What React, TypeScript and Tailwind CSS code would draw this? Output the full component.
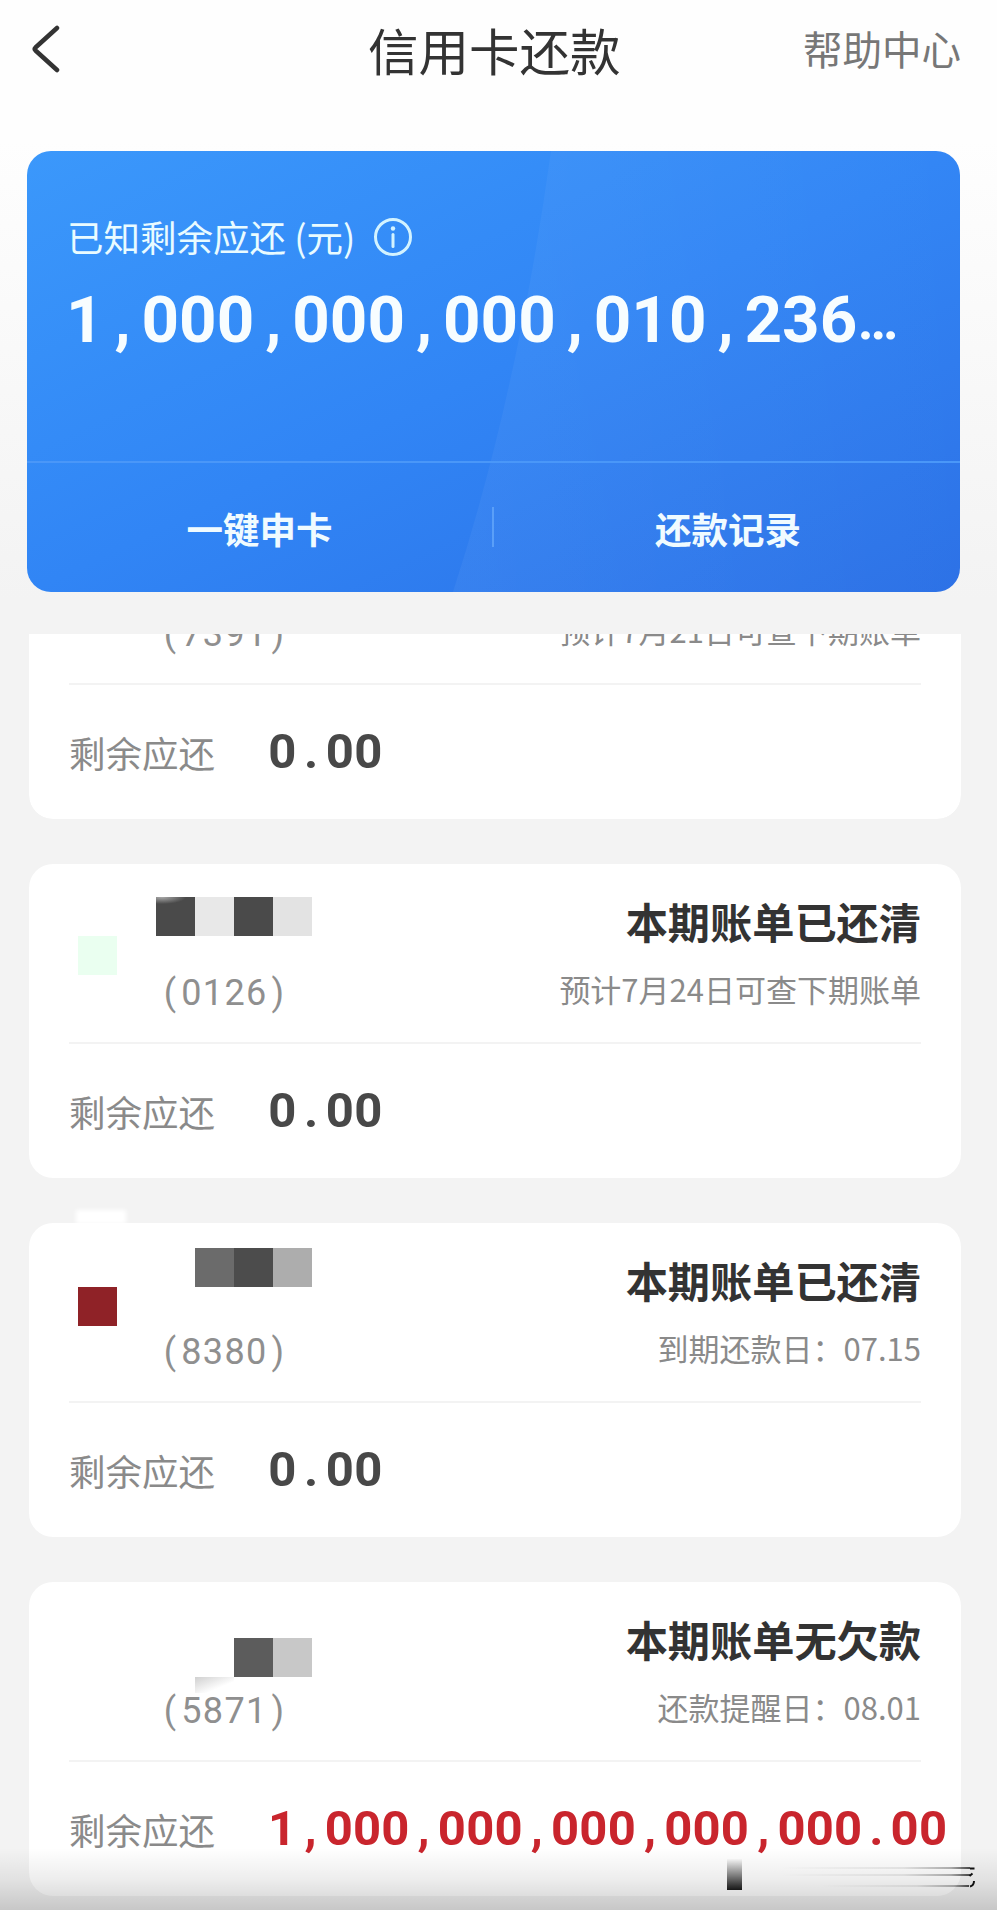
import React from "react";
import { twMerge } from "tailwind-merge";

interface Bill {
  tail: string;
  status?: string;
  note: string;
  amount: string;
  overdue?: boolean;
  logo?: string;
  blocks: string[];
  blockTop?: string;
}

const bills: Bill[] = [
  {
    tail: "(0126)",
    status: "本期账单已还清",
    note: "预计7月24日可查下期账单",
    amount: "0.00",
    logo: "mt-[72px] bg-[#eafff0]",
    blocks: [
      "bg-[#4a4a4a] bg-[radial-gradient(ellipse_24px_7px_at_6px_0px,#aaa,#4a4a4a)]",
      "bg-[#e8e8e8]",
      "bg-[#4a4a4a]",
      "bg-[#e3e3e3]",
    ],
    blockTop: "mt-[33px] h-[39px]",
  },
  {
    tail: "(8380)",
    status: "本期账单已还清",
    note: "到期还款日：07.15",
    amount: "0.00",
    logo: "mt-[64px] bg-[#8f2227]",
    blocks: ["bg-transparent", "bg-[#6b6b6b]", "bg-[#4c4c4c]", "bg-[#adadad]"],
    blockTop: "mt-[25px] h-[39px]",
  },
  {
    tail: "(5871)",
    status: "本期账单无欠款",
    note: "还款提醒日：08.01",
    amount: "1,000,000,000,000,000.00",
    overdue: true,
    blocks: [
      "bg-transparent",
      "mt-[39px] h-[16px] bg-linear-to-br from-[#d0d0d0] to-white to-65%",
      "bg-[#5c5c5c]",
      "bg-[#c8c8c8]",
    ],
    blockTop: "mt-[56px] h-[39px]",
  },
];

interface DigitsProps {
  value: string;
  className?: string;
  cell: string;
}

// every character, punctuation included, takes one cell of the same width
const Digits: React.FC<DigitsProps> = ({ value, className, cell }) => {
  return (
    <span
      className={twMerge(
        "flex font-['Roboto','Noto_Sans_CJK_SC',sans-serif] whitespace-nowrap",
        className
      )}
    >
      {value.split("").map((char, i) => (
        <span key={i} className={twMerge("block text-center", cell)}>
          {char}
        </span>
      ))}
    </span>
  );
};

const Header: React.FC = () => {
  return (
    <header className="flex h-[151px] items-start pl-[30px]">
      <svg
        className="mt-[25px] h-[48px] w-[32px]"
        viewBox="0 0 32 48"
        fill="none"
        stroke="#333333"
        strokeWidth="4.5"
        strokeLinecap="round"
        strokeLinejoin="round"
      >
        <path d="M27 3 5.500 22.500q-1.500 1.500 0 3L27 45" />
      </svg>
      <h1 className="mt-[16px] ml-[306px] w-[254px] text-[50.500px] leading-[66px] whitespace-nowrap text-[#333]">
        信用卡还款
      </h1>
      <a className="mt-[20px] ml-[181px] text-[39.500px] leading-[56px] whitespace-nowrap text-[#777]">
        帮助中心
      </a>
    </header>
  );
};

const Summary: React.FC = () => {
  return (
    <section className="relative ml-[27px] flex h-[441px] w-[933px] flex-col overflow-hidden rounded-[24px] bg-linear-to-br from-[#3b98fb] via-[#3185f5] to-[#2b70e6]">
      <svg
        className="absolute inset-0 h-full w-full"
        viewBox="0 0 933 441"
        preserveAspectRatio="none"
      >
        <defs>
          <linearGradient id="sheen" x1="0" y1="0" x2="1" y2="0">
            <stop offset="0" stopColor="#fff" stopOpacity="0.045" />
            <stop offset="1" stopColor="#fff" stopOpacity="0.01" />
          </linearGradient>
        </defs>
        <path d="M524 0H933V441H426Q491 240 524 0Z" fill="url(#sheen)" />
      </svg>
      <div className="relative flex h-[310px] flex-col pl-[40px]">
        <div className="mt-[60px] flex h-[52px] items-center text-[36.500px] text-[#e9fbff]">
          <span className="w-[290px] whitespace-pre">已知剩余应还 (元)</span>
          <svg
            className="ml-[16px] h-[40px] w-[40px]"
            viewBox="0 0 40 40"
            fill="none"
            stroke="#d3f3ff"
            strokeWidth="3"
          >
            <circle cx="20" cy="20" r="17.500" />
            <path d="M20 17.500V29.500" strokeLinecap="round" />
            <circle cx="20" cy="11.500" r="2.200" fill="#d3f3ff" stroke="none" />
          </svg>
        </div>
        <div className="mt-[17px] -ml-[1px] flex leading-[80px] text-[#f7fdff]">
          <Digits
            value="1,000,000,000,010,236"
            className="text-[65.500px] leading-[80px] font-bold"
            cell="w-[37.700px]"
          />
          <span className="font-['Roboto',sans-serif] text-[55px] leading-[80px] font-bold">
            …
          </span>
        </div>
      </div>
      <div className="relative flex h-[131px] items-center border-t-2 border-[#4a97f8] text-[36.500px] font-bold text-[#f0fbff]">
        <a className="w-[466px] pt-[3px] text-center">一键申卡</a>
        <i className="mb-[2px] h-[40px] w-[2px] bg-[#5a9ff8]" />
        <a className="w-[467px] pt-[3px] pl-[2px] text-center">还款记录</a>
      </div>
    </section>
  );
};

interface AmountProps {
  amount: string;
  overdue?: boolean;
}

const Amount: React.FC<AmountProps> = ({ amount, overdue }) => {
  return (
    <div className="flex h-[134px] items-center pl-[40px]">
      <span className="mt-[3px] w-[199px] text-[36.500px] text-[#8a8a8a]">
        剩余应还
      </span>
      <Digits
        value={amount}
        className={twMerge(
          "text-[49px] leading-[60px] font-bold text-[#484848]",
          overdue && "text-[#c9252d]"
        )}
        cell={overdue ? "w-[28.300px]" : "w-[28.700px]"}
      />
    </div>
  );
};

const BillCard: React.FC<Bill> = ({
  tail,
  status,
  note,
  amount,
  overdue,
  logo,
  blocks,
  blockTop,
}) => {
  return (
    <article className="h-[314px] shrink-0 rounded-[24px] bg-white">
      <div className="flex h-[178px] pr-[40px] pl-[49px]">
        <div className={twMerge("mr-[39px] h-[39px] w-[39px]", logo)} />
        <div className="flex flex-1 flex-col">
          <div className={twMerge("flex", blockTop)}>
            {blocks.map((block, i) => (
              <div key={i} className={twMerge("h-[39px] w-[39px]", block)} />
            ))}
          </div>
          <div className="mt-auto mb-[25px] ml-[3px]">
            <Digits
              value={tail}
              className="text-[36px] leading-[48px] text-[#8f8f8f]"
              cell="w-[21.600px]"
            />
          </div>
        </div>
        <div className="flex flex-col items-end whitespace-nowrap">
          <strong className="mt-[29px] h-[56px] text-[42.200px] leading-[56px] font-bold text-[#333]">
            {status}
          </strong>
          <span className="mt-[18px] text-[31px] leading-[44px] text-[#8a8a8a]">
            {note}
          </span>
        </div>
      </div>
      <hr className="mx-[40px] h-[2px] border-0 bg-[#f3f3f3]" />
      <Amount amount={amount} overdue={overdue} />
    </article>
  );
};

// leftovers of the system bar, smeared along the bottom edge
const BottomShade: React.FC = () => {
  return (
    <div className="absolute bottom-0 left-0 h-[62px] w-full bg-linear-to-b from-black/0 via-black/7 to-black/18">
      <svg className="h-full w-full" viewBox="0 0 997 62">
        <defs>
          <linearGradient id="bar" x1="0" y1="0" x2="0" y2="1">
            <stop offset="0" stopColor="#000" stopOpacity="0.02" />
            <stop offset="0.5" stopColor="#000" stopOpacity="0.45" />
            <stop offset="1" stopColor="#000" stopOpacity="0.9" />
          </linearGradient>
          <linearGradient id="streak" x1="0" y1="0" x2="1" y2="0">
            <stop offset="0" stopColor="#000" stopOpacity="0" />
            <stop offset="0.65" stopColor="#000" stopOpacity="0.08" />
            <stop offset="0.9" stopColor="#000" stopOpacity="0.3" />
            <stop offset="1" stopColor="#000" stopOpacity="0.7" />
          </linearGradient>
        </defs>
        <rect x="727" y="11" width="15" height="31" fill="url(#bar)" />
        <rect x="780" y="19" width="190" height="2" fill="url(#streak)" />
        <rect x="780" y="26" width="190" height="2" fill="url(#streak)" />
        <rect x="820" y="37" width="149" height="2" fill="url(#streak)" />
        <path
          d="M970 20.500h4.500M972.500 25.500l-3 2.500M974 33q0 4.500-4 5.500"
          fill="none"
          stroke="#111"
          strokeWidth="2"
        />
      </svg>
    </div>
  );
};

export default function App() {
  return (
    <main className="relative flex h-[1910px] w-[997px] flex-col overflow-hidden bg-[#f3f3f3] bg-[linear-gradient(to_bottom,#fefefe_0px,#fefefe_140px,#f3f3f3_600px)] font-['Noto_Sans_CJK_SC',sans-serif]">
      <Header />
      <Summary />
      <div className="mt-[42px] mr-[36px] ml-[29px] flex h-[185px] flex-col justify-end overflow-hidden rounded-b-[24px]">
        <BillCard
          tail="(7391)"
          note="预计7月21日可查下期账单"
          amount="0.00"
          blocks={[]}
        />
      </div>
      <div className="relative mt-[45px] mr-[36px] ml-[29px] flex flex-col gap-[45px]">
        <i className="absolute top-[346px] left-[47px] h-[14px] w-[50px] bg-white blur-[2px]" />
        {bills.map((bill) => (
          <BillCard key={bill.tail} {...bill} />
        ))}
      </div>
      <BottomShade />
    </main>
  );
}
